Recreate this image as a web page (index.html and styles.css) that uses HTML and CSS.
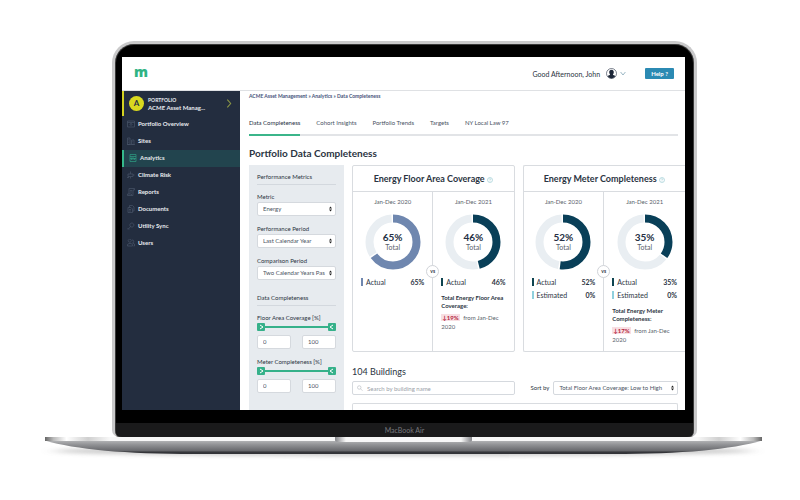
FILE: index.html
```html
<!DOCTYPE html>
<html lang="en">
<head>
    <meta charset="UTF-8">
    <meta name="viewport" content="width=device-width, initial-scale=1.0">
    <title>Portfolio Data Completeness</title>
    <link rel="stylesheet" href="styles.css">
</head>
<body>

<div class="laptop">
    <div class="lid">
        <div class="screen">
            <header class="topbar">
                <a href="#" class="logo">m</a>
                <span class="greeting">Good Afternoon, John</span>
                <button class="user-menu" aria-label="Account menu">
                    <svg class="avatar" viewBox="0 0 22 22">
                        <circle cx="11" cy="11" r="10" fill="#fff" stroke="#253044" stroke-width="1.2"/>
                        <path d="M11 3.500c-3 0-4.600 2-4.600 5 0 2 .8 3.600 1.800 4.700-.3 1.500-3.200 1.500-4.700 3.300A10 10 0 0 0 11 21a10 10 0 0 0 7.500-4.500c-1.500-1.800-4.400-1.800-4.700-3.300 1-1.100 1.800-2.700 1.800-4.700 0-3-1.600-5-4.600-5z" fill="#1d2738"/>
                    </svg>
                    <svg class="caret" viewBox="0 0 10 8"><path d="M1 1.500l4 5 4-5" fill="none" stroke="#7fa3b4" stroke-width="1.300"/></svg>
                </button>
                <button class="help">Help ?</button>
            </header>

            <div class="layout">
                <nav class="sidebar">
                    <a href="#" class="portfolio">
                        <span class="badge">A</span>
                        <span class="portfolio-name"><small>PORTFOLIO</small>ACME Asset Manag...</span>
                        <svg class="next" viewBox="0 0 10 16"><path d="M2 1l6 7-6 7" fill="none" stroke="#8f9a45" stroke-width="1.800"/></svg>
                    </a>
                    <a href="#" class="item"><svg viewBox="0 0 16 16"><path d="M1 2h14v12H1zM1 5h14M8 7v5M5 9l3-2 3 2"/></svg>Portfolio Overview</a>
                    <a href="#" class="item"><svg viewBox="0 0 16 16"><path d="M1 15V2h5v13zM9 15V6h5v9zM3 5h1M3 8h1M3 11h1M11 9h1M11 12h1M0 15h16"/></svg>Sites</a>
                    <a href="#" class="item active"><svg viewBox="0 0 16 16"><path d="M2 1h12v14H2zM2 5h12M2 9h12M5 12V7M8 12V6M11 12V8"/></svg>Analytics</a>
                    <a href="#" class="item"><svg viewBox="0 0 16 16"><path d="M7 1v5H2v5h5v4M7 6h5v5H7M12 8h3M0 13h4"/></svg>Climate Risk</a>
                    <a href="#" class="item"><svg viewBox="0 0 16 16"><path d="M4 12V1h11v3h-3v11H1v-3h8v3M6 5h4M6 8h4"/></svg>Reports</a>
                    <a href="#" class="item"><svg viewBox="0 0 16 16"><path d="M5 5V1h6l3 3v8h-3M2 5h6l3 3v7H2zM4 9h4M4 12h4"/></svg>Documents</a>
                    <a href="#" class="item"><svg viewBox="0 0 16 16"><path d="M2 15l6-7M7 9a4 4 0 1 1 2 1zM1 12l3 3"/></svg>Utility Sync</a>
                    <a href="#" class="item"><svg viewBox="0 0 16 16"><path d="M3 5a3 3 0 1 1 5 0 3 3 0 0 1-5 0zM1 14V11l3-2h4l3 2v3zM10 2a3 3 0 0 1 1 6l4 2v4h-2"/></svg>Users</a>
                </nav>

                <main class="main">
                    <div class="breadcrumb">
                        <a href="#">ACME Asset Management</a> » <a href="#">Analytics</a> » <a href="#">Data Completeness</a>
                    </div>
                    <div class="tabs">
                        <a href="#" class="selected">Data Completeness</a>
                        <a href="#">Cohort Insights</a>
                        <a href="#">Portfolio Trends</a>
                        <a href="#">Targets</a>
                        <a href="#">NY Local Law 97</a>
                    </div>
                    <h1>Portfolio Data Completeness</h1>

                    <div class="content">
                        <form class="filters">
                            <h2>Performance Metrics</h2>
                            <label for="metric">Metric</label>
                            <select id="metric"><option>Energy</option></select>
                            <label for="period">Performance Period</label>
                            <select id="period"><option>Last Calendar Year</option></select>
                            <label for="comparison">Comparison Period</label>
                            <select id="comparison"><option>Two Calendar Years Pas</option></select>

                            <h2 class="second">Data Completeness</h2>
                            <label for="floorMin">Floor Area Coverage [%]</label>
                            <div class="slider">
                                <input type="range" class="low" value="0" aria-label="Lowest floor area coverage">
                                <input type="range" class="high" value="100" aria-label="Highest floor area coverage">
                            </div>
                            <div class="range-values">
                                <input type="text" id="floorMin" value="0">
                                <input type="text" value="100" aria-label="Floor area coverage maximum">
                            </div>
                            <label for="meterMin">Meter Completeness [%]</label>
                            <div class="slider">
                                <input type="range" class="low" value="0" aria-label="Lowest meter completeness">
                                <input type="range" class="high" value="100" aria-label="Highest meter completeness">
                            </div>
                            <div class="range-values">
                                <input type="text" id="meterMin" value="0">
                                <input type="text" value="100" aria-label="Meter completeness maximum">
                            </div>
                        </form>

                        <div class="results">
                            <div class="cards">
                                <section class="card">
                                    <h3>Energy Floor Area Coverage <svg class="info" viewBox="0 0 12 12"><circle cx="6" cy="6" r="5"/><path d="M4.500 4.800c0-2 3-2 3 0 0 1-1.500 1-1.500 2.200M6 8v1"/></svg></h3>
                                    <div class="compare">
                                        <div class="year">
                                            <p class="date">Jan-Dec 2020</p>
                                            <div class="donut">
                                                <svg viewBox="0 0 56 56">
                                                    <circle class="track" cx="28" cy="28" r="23.500" pathLength="100" stroke-dasharray="33 67" stroke-dashoffset="-66"/>
                                                    <circle class="past" cx="28" cy="28" r="23.500" pathLength="100" stroke-dasharray="65 35"/>
                                                </svg>
                                                <p><b>65%</b>Total</p>
                                            </div>
                                            <div class="legend past-key"><span>Actual</span><b>65%</b></div>
                                        </div>
                                        <span class="vs">vs</span>
                                        <div class="year">
                                            <p class="date">Jan-Dec 2021</p>
                                            <div class="donut">
                                                <svg viewBox="0 0 56 56">
                                                    <circle class="track" cx="28" cy="28" r="23.500" pathLength="100" stroke-dasharray="52 48" stroke-dashoffset="-47"/>
                                                    <circle class="now" cx="28" cy="28" r="23.500" pathLength="100" stroke-dasharray="46 54"/>
                                                </svg>
                                                <p><b>46%</b>Total</p>
                                            </div>
                                            <div class="legend"><span>Actual</span><b>46%</b></div>
                                            <div class="change">
                                                <h4>Total Energy Floor Area Coverage:</h4>
                                                <p><span class="drop">↓19%</span> from Jan-Dec 2020</p>
                                            </div>
                                        </div>
                                    </div>
                                </section>

                                <section class="card cut">
                                    <h3>Energy Meter Completeness <svg class="info" viewBox="0 0 12 12"><circle cx="6" cy="6" r="5"/><path d="M4.500 4.800c0-2 3-2 3 0 0 1-1.500 1-1.500 2.200M6 8v1"/></svg></h3>
                                    <div class="compare">
                                        <div class="year">
                                            <p class="date">Jan-Dec 2020</p>
                                            <div class="donut">
                                                <svg viewBox="0 0 56 56">
                                                    <circle class="track" cx="28" cy="28" r="23.500" pathLength="100" stroke-dasharray="46 54" stroke-dashoffset="-53"/>
                                                    <circle class="now" cx="28" cy="28" r="23.500" pathLength="100" stroke-dasharray="52 48"/>
                                                </svg>
                                                <p><b>52%</b>Total</p>
                                            </div>
                                            <div class="legend"><span>Actual</span><b>52%</b></div>
                                            <div class="legend estimated"><span>Estimated</span><b>0%</b></div>
                                        </div>
                                        <span class="vs">vs</span>
                                        <div class="year">
                                            <p class="date">Jan-Dec 2021</p>
                                            <div class="donut">
                                                <svg viewBox="0 0 56 56">
                                                    <circle class="track" cx="28" cy="28" r="23.500" pathLength="100" stroke-dasharray="63 37" stroke-dashoffset="-36"/>
                                                    <circle class="now" cx="28" cy="28" r="23.500" pathLength="100" stroke-dasharray="35 65"/>
                                                </svg>
                                                <p><b>35%</b>Total</p>
                                            </div>
                                            <div class="legend"><span>Actual</span><b>35%</b></div>
                                            <div class="legend estimated"><span>Estimated</span><b>0%</b></div>
                                            <div class="change">
                                                <h4>Total Energy Meter Completeness:</h4>
                                                <p><span class="drop">↓17%</span> from Jan-Dec 2020</p>
                                            </div>
                                        </div>
                                    </div>
                                </section>
                            </div>

                            <h2 class="count">104 Buildings</h2>
                            <div class="toolbar">
                                <div class="search">
                                    <svg viewBox="0 0 12 12"><path d="M8 5a3.500 3.500 0 1 1-7 0 3.500 3.500 0 0 1 7 0zM7 7.500l4 4" fill="none" stroke="#a5abb2"/></svg>
                                    <input type="text" placeholder="Search by building name" aria-label="Search by building name">
                                </div>
                                <div class="sort">
                                    <label for="sort">Sort by</label>
                                    <select id="sort"><option>Total Floor Area Coverage: Low to High</option></select>
                                </div>
                            </div>
                            <div class="building-list"></div>
                        </div>
                    </div>
                </main>
            </div>
        </div>
        <div class="chin">MacBook Air</div>
    </div>

    <svg class="base" viewBox="0 0 717 30" preserveAspectRatio="none">
        <defs>
            <linearGradient id="metal" x1="0" y1="0" x2="0" y2="1">
                <stop offset="0" stop-color="#b4b5b7"/>
                <stop offset=".3" stop-color="#929396"/>
                <stop offset=".75" stop-color="#68696d"/>
                <stop offset=".86" stop-color="#36373b"/>
                <stop offset="1" stop-color="#303136"/>
            </linearGradient>
            <linearGradient id="edge">
                <stop offset="0" stop-color="#666"/>
                <stop offset=".012" stop-color="#bbb"/>
                <stop offset=".03" stop-color="#fff"/>
                <stop offset=".06" stop-color="#cfcfcf"/>
                <stop offset=".09" stop-color="#f7f7f7"/>
                <stop offset=".91" stop-color="#f7f7f7"/>
                <stop offset=".94" stop-color="#cfcfcf"/>
                <stop offset=".97" stop-color="#fff"/>
                <stop offset=".988" stop-color="#bbb"/>
                <stop offset="1" stop-color="#666"/>
            </linearGradient>
            <linearGradient id="notch">
                <stop offset="0" stop-color="#85868a"/>
                <stop offset=".08" stop-color="#f7f7f7"/>
                <stop offset=".92" stop-color="#f7f7f7"/>
                <stop offset="1" stop-color="#85868a"/>
            </linearGradient>
            <filter id="soft" x="-10%" y="-100%" width="120%" height="300%"><feGaussianBlur stdDeviation="8 2"/></filter>
        </defs>
        <ellipse cx="358" cy="14" rx="350" ry="5" fill="#777" opacity=".4" filter="url(#soft)"/>
        <path d="M0 3.500h717c-30 9-80 13.500-150 13.500H150C80 17 30 12.500 0 3.500z" fill="url(#metal)"/>
        <path d="M0 0h717v4H0z" fill="url(#edge)"/>
        <path d="M290 0h137v3q0 2-4 2H294q-4 0-4-2z" fill="url(#notch)"/>
    </svg>
</div>

</body>
</html>
```
FILE: styles.css
```css
* {
    box-sizing: border-box;
}
body {
    margin: 0;
    background: #fff;
    color: #2b3442;
    font-family: Lato, "Liberation Sans", sans-serif;
    font-size: 6px;
    line-height: 8px;
}
a {
    color: inherit;
    text-decoration: none;
}
h1, h2, h3, h4, p {
    margin: 0;
}
button, input, select {
    font: inherit;
    color: inherit;
    margin: 0;
}
button {
    border: none;
    cursor: pointer;
}

/* laptop */
.laptop {
    margin: 41px 38px 0 45px;
}
.lid {
    margin: 0 65px 0 67px;
    padding: 13px 9px 0 7px;
    background: #000;
    border: 3px solid #c9c9ca;
    border-bottom: none;
    border-radius: 22px 22px 7px 7px;
    box-shadow: inset 0 0 0 1px #3a3a3a;
}
.screen {
    background: #fff;
    overflow: hidden;
}
.chin {
    margin: 13px -8px 0 -6px;
    height: 14px;
    background: #1a1a1b;
    border-radius: 0 0 6px 6px;
    color: #77787b;
    font-size: 7px;
    line-height: 14px;
    text-align: center;
}
.base {
    display: block;
    width: 100%;
    height: 30px;
    overflow: visible;
}

/* top bar */
.topbar {
    display: flex;
    align-items: center;
    height: 34px;
    padding: 0 11px 0 12px;
    border-bottom: 1px solid #dfe1e4;
}
.logo {
    margin-right: auto;
    color: #2fb383;
    font-family: "Open Sans", sans-serif;
    font-size: 14px;
    font-weight: 800;
    line-height: 16px;
    padding-bottom: 3px;
}
.greeting {
    font-size: 7px;
}
.user-menu {
    display: flex;
    align-items: center;
    gap: 3px;
    margin: 0 19px 0 6px;
    padding: 0;
    background: none;
}
.avatar {
    width: 11px;
    height: 11px;
}
.caret {
    width: 6px;
    height: 5px;
}
.help {
    padding: 1px 6px;
    background: #2b8ab3;
    border-radius: 1px;
    color: #fff;
    font-weight: bold;
    line-height: 9px;
}

/* sidebar */
.layout {
    display: flex;
}
.sidebar {
    flex: 0 0 118px;
    background: #232d3f;
    color: #e8ebef;
    font-weight: bold;
}
.portfolio {
    display: flex;
    align-items: center;
    gap: 4px;
    height: 25px;
    padding: 0 8px 0 5px;
    border-left: 2px solid #d3d222;
}
.badge {
    width: 15px;
    height: 15px;
    border-radius: 50%;
    background: #d9d91f;
    color: #253044;
    font-size: 8px;
    line-height: 15px;
    text-align: center;
}
.portfolio-name {
    flex: 1;
}
.portfolio-name small {
    display: block;
    font-size: 5px;
}
.next {
    width: 6px;
    height: 9px;
}
.item {
    display: flex;
    align-items: center;
    gap: 3px;
    height: 17px;
    padding: 0 0 1px 5px;
}
.item svg {
    width: 8px;
    height: 8px;
    fill: none;
    stroke: #455165;
    stroke-width: 1.5;
}
.item.active {
    background: #22444e;
    border-left: 2px solid #35b98c;
}
.item.active svg {
    stroke: #2d9a80;
}

/* main column */
.main {
    flex: 1;
    min-width: 0;
    padding-left: 9px;
}
.breadcrumb {
    padding-top: 1px;
    color: #46527a;
    font-size: 5px;
    font-weight: bold;
}
.tabs {
    display: flex;
    gap: 16px;
    margin: 19px 7px 0 0;
    border-bottom: 2px solid #e2e4e7;
    color: #48525f;
}
.tabs a {
    padding-bottom: 7px;
}
.tabs .selected {
    margin-bottom: -2px;
    border-bottom: 2px solid #3bb58a;
    color: #253044;
}
h1 {
    margin: 11px 0 6px;
    font-size: 10px;
    line-height: 12px;
}
.content {
    display: flex;
    gap: 8px;
}

/* filters */
.filters {
    flex: 0 0 95px;
    padding: 8px 8px 0;
    background: #e7ebef;
}
.filters h2 {
    margin-bottom: 8px;
    padding-bottom: 3px;
    border-bottom: 1px solid #d3d8de;
    font-size: 6px;
    font-weight: normal;
}
.filters .second {
    margin-top: 14px;
}
.filters label {
    display: block;
    margin-bottom: 1px;
}
select, input[type="text"] {
    display: block;
    width: 100%;
    height: 14px;
    padding: 0 5px;
    border: 1px solid #d5d9de;
    border-radius: 2px;
    background: #fff;
    color: #4b545f;
}
select {
    appearance: none;
    padding-right: 9px;
    background: #fff url("data:image/svg+xml,%3Csvg xmlns='http://www.w3.org/2000/svg' viewBox='0 0 6 10'%3E%3Cpath d='M0 4l3-4 3 4zM0 6l3 4 3-4z' fill='%23222'/%3E%3C/svg%3E") no-repeat right 3px center / 3px 6px;
}
.filters select {
    margin-bottom: 9px;
}
.filters .range-values input {
    padding-bottom: 1px;
}
.slider {
    display: grid;
    align-items: center;
    height: 8px;
    background: linear-gradient(#36b18a, #36b18a) center / 100% 2px no-repeat;
}
.slider input {
    grid-area: 1 / 1;
    appearance: none;
    width: 100%;
    height: 8px;
    background: none;
    pointer-events: none;
}
.slider input::-webkit-slider-thumb {
    appearance: none;
    width: 8px;
    height: 8px;
    border-radius: 1px;
    background: #36b18a url("data:image/svg+xml,%3Csvg xmlns='http://www.w3.org/2000/svg' viewBox='0 0 8 8'%3E%3Cpath d='M3 2l3 2-3 2' fill='none' stroke='%23fff'/%3E%3C/svg%3E");
    pointer-events: auto;
}
.slider .high::-webkit-slider-thumb {
    background-image: url("data:image/svg+xml,%3Csvg xmlns='http://www.w3.org/2000/svg' viewBox='0 0 8 8'%3E%3Cpath d='M5 2L2 4l3 2' fill='none' stroke='%23fff'/%3E%3C/svg%3E");
}
.range-values {
    display: grid;
    grid-template-columns: 1fr 1fr;
    gap: 11px;
    margin: 4px 0 9px;
}

/* cards */
.results {
    flex: 1;
    min-width: 0;
}
.cards {
    display: grid;
    grid-template-columns: 1fr 1fr;
    gap: 8px;
}
.card {
    display: flex;
    flex-direction: column;
    min-height: 187px;
    border: 1px solid #d9dce0;
    border-radius: 2px;
}
.card.cut {
    border-right: none;
    border-radius: 2px 0 0 2px;
}
.card h3 {
    border-bottom: 1px solid #d9dce0;
    font-size: 9px;
    line-height: 25px;
    text-align: center;
}
.info {
    width: 6px;
    height: 6px;
    vertical-align: middle;
    fill: none;
    stroke: #7fbcc6;
}
.compare {
    position: relative;
    display: grid;
    grid-template-columns: 1fr 1fr;
    flex: 1;
}
.year {
    padding: 6px 8px 0;
}
.year:first-child {
    border-right: 1px solid #d9dce0;
}
.date {
    color: #59616b;
    text-align: center;
}
.donut {
    display: grid;
    place-items: center;
    margin: 8px 0;
}
.donut svg, .donut p {
    grid-area: 1 / 1;
}
.donut svg {
    width: 56px;
    height: 56px;
    transform: rotate(-90deg);
}
.donut circle {
    fill: none;
    stroke-width: 8;
}
.donut .track {
    stroke: #e9eef2;
}
.donut .past {
    stroke: #6f87af;
}
.donut .now {
    stroke: #093f58;
}
.donut p {
    padding-bottom: 2px;
    color: #59616b;
    font-size: 7px;
    text-align: center;
}
.donut b {
    display: block;
    color: #253044;
    font-size: 10px;
    line-height: 12px;
}
.vs {
    position: absolute;
    top: 73px;
    left: calc(50% - 7px);
    width: 13px;
    height: 13px;
    border: 1px solid #d0d3d8;
    border-radius: 50%;
    background: #fff;
    font-size: 5px;
    font-weight: bold;
    line-height: 10px;
    text-align: center;
}
.legend {
    display: flex;
    justify-content: space-between;
    margin-bottom: 5px;
    padding-left: 3px;
    border-left: 2px solid #0e4450;
    font-size: 7px;
}
.past-key {
    border-color: #6f87af;
}
.estimated {
    border-color: #8fd0dd;
}
.change {
    padding-top: 3px;
}
.change h4 {
    margin-bottom: 3px;
    font-size: 6px;
}
.change p {
    color: #59616b;
    line-height: 9px;
}
.drop {
    margin-right: 2px;
    padding: 0 1px;
    background: #f8dfe3;
    color: #b3243b;
    font-weight: bold;
}

/* buildings */
.count {
    margin: 14px 0 3px;
    font-size: 9px;
    font-weight: normal;
    line-height: 12px;
}
.toolbar {
    display: grid;
    grid-template-columns: 1fr 1fr;
    gap: 8px;
}
.search {
    display: flex;
    align-items: center;
    gap: 4px;
    padding-left: 4px;
    border: 1px solid #d5d9de;
    border-radius: 2px;
}
.search svg {
    width: 6px;
    height: 6px;
}
.search input[type="text"] {
    flex: 1;
    height: 12px;
    padding: 0;
    border: none;
}
.search input::placeholder {
    color: #9aa1a9;
}
.sort {
    display: flex;
    align-items: center;
    gap: 4px;
    padding: 0 7px 0 8px;
    white-space: nowrap;
}
.sort select {
    flex: 1;
    min-width: 0;
}
.building-list {
    height: 7px;
    margin: 8px 7px 0 0;
    border: 1px solid #d9dce0;
    border-bottom: none;
    border-radius: 2px 2px 0 0;
}
```
